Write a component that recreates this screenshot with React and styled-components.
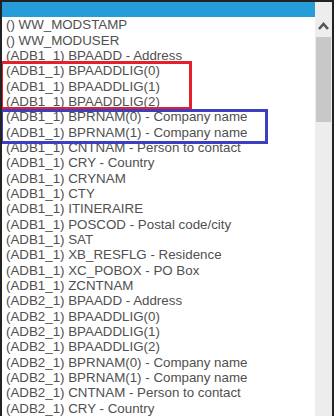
import React from 'react';
import styled, { createGlobalStyle } from 'styled-components';

const GlobalStyle = createGlobalStyle`
    html, body {
        margin: 0;
        padding: 0;
        background: #ffffff;
        overflow: hidden;
    }
`;

const Frame = styled.div`
    position: relative;
    width: 334px;
    height: 416px;
    box-sizing: border-box;
    border-top: 2px solid #222;
    border-left: 2px solid #222;
    border-right: 2px solid #222;
    display: flex;
    flex-direction: row;
    overflow: hidden;
    background: #fff;
`;

const List = styled.div`
    flex: 1;
    display: flex;
    flex-direction: column;
    font-family: "Liberation Sans", Arial, sans-serif;
    font-size: 13.333px;
    line-height: normal;
    color: #505050;
`;

const Option = styled.div`
    height: 15.333px;
    padding-left: 4px;
    white-space: nowrap;
    background: ${p => (p.selected ? '#269cd9' : 'transparent')};
    color: ${p => (p.selected ? '#fff' : 'inherit')};
`;

const Scrollbar = styled.div`
    width: 17px;
    background: #ededed;
    display: flex;
    flex-direction: column;
    align-items: center;
`;

const ArrowBox = styled.div`
    height: 17px;
    width: 17px;
    display: flex;
    align-items: center;
    justify-content: center;
    margin-top: 15px;
`;

const Thumb = styled.div`
    width: 15px;
    height: 85px;
    margin-top: 3px;
    background: #c8c8c8;
`;

const Highlight = styled.div`
    position: absolute;
    left: -2px;
    box-sizing: border-box;
    border: 3px solid ${p => p.color};
    pointer-events: none;
`;

const options = [
    '() WW_MODSTAMP',
    '() WW_MODUSER',
    '(ADB1_1) BPAADD - Address',
    '(ADB1_1) BPAADDLIG(0)',
    '(ADB1_1) BPAADDLIG(1)',
    '(ADB1_1) BPAADDLIG(2)',
    '(ADB1_1) BPRNAM(0) - Company name',
    '(ADB1_1) BPRNAM(1) - Company name',
    '(ADB1_1) CNTNAM - Person to contact',
    '(ADB1_1) CRY - Country',
    '(ADB1_1) CRYNAM',
    '(ADB1_1) CTY',
    '(ADB1_1) ITINERAIRE',
    '(ADB1_1) POSCOD - Postal code/city',
    '(ADB1_1) SAT',
    '(ADB1_1) XB_RESFLG - Residence',
    '(ADB1_1) XC_POBOX - PO Box',
    '(ADB1_1) ZCNTNAM',
    '(ADB2_1) BPAADD - Address',
    '(ADB2_1) BPAADDLIG(0)',
    '(ADB2_1) BPAADDLIG(1)',
    '(ADB2_1) BPAADDLIG(2)',
    '(ADB2_1) BPRNAM(0) - Company name',
    '(ADB2_1) BPRNAM(1) - Company name',
    '(ADB2_1) CNTNAM - Person to contact',
    '(ADB2_1) CRY - Country',
];

const App = () => (
    <Frame>
        <GlobalStyle />
        <List>
            <Option selected>&nbsp;</Option>
            {options.map((o, i) => (
                <Option key={i}>{o}</Option>
            ))}
        </List>
        <Scrollbar>
            <ArrowBox>
                <svg width="11" height="8" viewBox="0 0 11 8">
                    <path d="M1 7 L5.5 2 L10 7" fill="none" stroke="#555" strokeWidth="2.6" />
                </svg>
            </ArrowBox>
            <Thumb />
        </Scrollbar>
        <Highlight color="#e4202a" style={{ top: 59, width: 192, height: 49 }} />
        <Highlight color="#3b3fc0" style={{ top: 107, width: 268, height: 35 }} />
    </Frame>
);

export default App;
